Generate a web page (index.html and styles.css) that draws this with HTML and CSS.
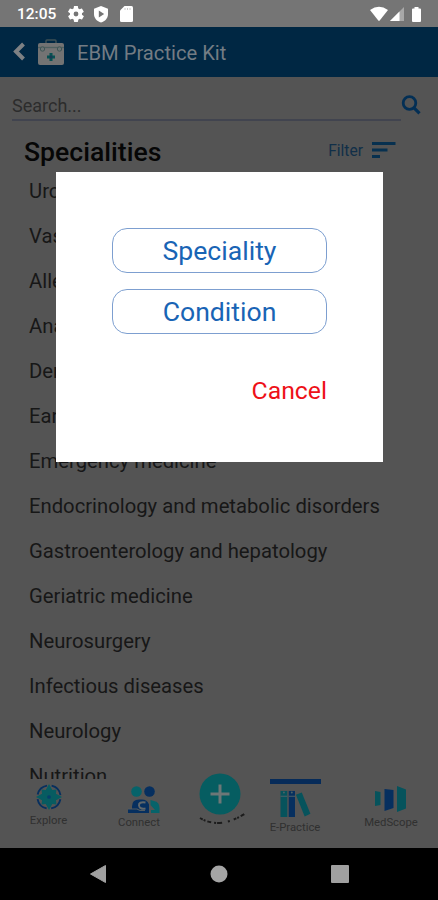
FILE: index.html
```html
<!DOCTYPE html>
<html lang="en">

<head>
  <meta charset="UTF-8" />
  <meta name="viewport" content="width=device-width, initial-scale=1.0" />
  <title>EBM Practice Kit</title>
  <link rel="stylesheet" href="styles.css">
</head>

<body>
  <div class="screen">
    <div class="status-bar">
      <span class="clock">12:05</span>
      <svg class="gear" width="16" height="16" viewBox="2 2 20 20" fill="#fff">
        <path fill-rule="evenodd" d="M19.4 13c0-.3.1-.6.1-1s0-.7-.1-1l2.1-1.6c.2-.2.3-.4.1-.6l-2-3.5c-.1-.2-.4-.3-.6-.2l-2.5 1c-.5-.4-1.1-.7-1.7-1l-.4-2.600c0-.3-.2-.5-.5-.5h-4c-.3 0-.5.2-.5.5L9 5.100c-.6.2-1.200.6-1.700 1l-2.500-1c-.2-.1-.5 0-.6.2l-2 3.500c-.1.2-.1.5.1.6L4.500 11c0 .3-.1.600-.1 1s0 .700.1 1l-2.100 1.600c-.2.2-.3.400-.1.600l2 3.500c.1.2.4.3.6.2l2.500-1c.5.4 1.100.700 1.700 1l.4 2.600c0 .3.2.5.500.5h4c.3 0 .5-.2.500-.5l.400-2.600c.6-.2 1.200-.6 1.700-1l2.500 1c.2.1.5 0 .6-.2l2-3.500c.1-.2.1-.5-.1-.600zM12 15a3 3 0 1 1 0-6 3 3 0 0 1 0 6z" />
      </svg>
      <svg class="shield" width="14" height="17" viewBox="0 0 14 17">
        <path fill="#fff" d="M7 0l7 2.800v5.200c0 4-3 7.500-7 8.500-4-1-7-4.500-7-8.500V2.800z" />
        <path fill="#757575" d="M4.800 4.600l5.400 3.400-5.400 3.400z" />
      </svg>
      <svg class="sd" width="13" height="16" viewBox="0 0 13 16">
        <path fill="#fff" d="M4.500 0h7Q13 0 13 1.500v13q0 1.500-1.500 1.500h-10Q0 16 0 14.500V4.500z" />
        <path stroke="#ccc" d="M5 2v2M7.500 2v2M10 2v2" />
      </svg>
      <svg class="signals" width="54" height="17" viewBox="0 0 54 17">
        <path fill="#fff" d="M0 4Q9-2.500 18 4L9.700 14.500q-.7.800-1.400 0z" />
        <path fill="#a8a8a8" d="M34 1v14H20z" />
        <path fill="#fff" d="M29.500 5.500V15H20z" />
        <path fill="#fff" d="M44.500 1h4v1.500h1.500q1 0 1 1V15q0 1-1 1h-7q-1 0-1-1V3.500q0-1 1-1h1.500z" />
      </svg>
    </div>

    <div class="header">
      <svg class="back" width="12" height="20" viewBox="0 0 12 20">
        <path d="M10.500 2L3 9.500l7.500 7.500" fill="none" stroke="#7e8184" stroke-width="4" />
      </svg>
      <svg class="kit" width="28" height="27" viewBox="0 0 28 27">
        <path d="M9 4V2q0-1 1-1h8q1 0 1 1v2" fill="none" stroke="#3d5056" stroke-width="1.500" />
        <rect x="1" y="4" width="26" height="22" rx="2" fill="#737373" />
        <path d="M1 8.500h26" stroke="#4f6060" stroke-width="1.300" />
        <circle cx="5.500" cy="10" r="2.200" fill="#6c7373" stroke="#405656" />
        <circle cx="22.500" cy="10" r="2.200" fill="#6c7373" stroke="#405656" />
        <path d="M12.500 14h3v2.500H18v3h-2.500V22h-3v-2.500H10v-3h2.500z" fill="#075152" />
        <circle cx="14" cy="18" r="1.500" fill="#183754" />
      </svg>
      <span class="title">EBM Practice Kit</span>
    </div>

    <div class="search">
      <div class="search-field">Search...</div>
      <svg width="20" height="20" viewBox="0 0 20 20" fill="none" stroke="#032f55">
        <circle cx="8.500" cy="8" r="6.300" stroke-width="2.800" />
        <path d="M13 12.800l5.500 5.500" stroke-width="3.200" />
      </svg>
    </div>

    <div class="list-head">
      <h1>Specialities</h1>
      <span class="filter">Filter</span>
      <svg width="24" height="18" viewBox="0 0 24 18" fill="#07304f">
        <rect x="0" y="0" width="23.500" height="3" />
        <rect x="0" y="6.500" width="15.500" height="3" />
        <rect x="0" y="13" width="8" height="3" />
      </svg>
    </div>

    <ul class="list">
      <li>Urology</li>
      <li>Vascular surgery</li>
      <li>Allergology</li>
      <li>Anaesthesiology</li>
      <li>Dermatology</li>
      <li>Ear, nose and throat</li>
      <li>Emergency medicine</li>
      <li>Endocrinology and metabolic disorders</li>
      <li>Gastroenterology and hepatology</li>
      <li>Geriatric medicine</li>
      <li>Neurosurgery</li>
      <li>Infectious diseases</li>
      <li>Neurology</li>
      <li>Nutrition</li>
    </ul>

    <div class="tabs">
      <div class="tab explore">
        <svg width="26" height="26" viewBox="0 0 28 28">
          <circle cx="14" cy="14" r="12.500" fill="none" stroke="#062f5f" stroke-width="2" stroke-dasharray="14.600 5.035" stroke-dashoffset="-2.500" />
          <path d="M14 0l3.500 6.500 4.500-.5-.5 4.500L28 14l-6.500 3.500.5 4.500-4.500-.5L14 28l-3.500-6.500-4.500.5.500-4.500L0 14l6.500-3.500L6 6l4.500.5z" fill="#075c61" />
          <circle cx="14" cy="14" r="2" fill="#073f6c" />
        </svg>
        <span>Explore</span>
      </div>
      <div class="tab connect">
        <svg width="33" height="27" viewBox="0 0 33 27">
          <circle cx="9.500" cy="5.500" r="5.300" fill="#06636a" />
          <circle cx="22.500" cy="5.500" r="5.300" fill="#062f5f" />
          <path d="M1 27v-4h4v-2.500H5q0-7 7-7h3q5 0 7 5V27z" fill="#062f5f" />
          <path d="M1 23h9l3 1.500h5" fill="none" stroke="#525b61" stroke-width="1.200" />
          <path d="M18.500 16.500q-7-1-6.500 3 .5 4 6.500 3" fill="none" stroke="#60676b" stroke-width="2" />
          <path d="M23.500 14l3.500 1q5.500 1 5.500 7v5h-8.500v-3h4l-4.500-5z" fill="#06636a" />
        </svg>
        <span>Connect</span>
      </div>
      <div class="tab add">
        <svg width="54" height="54" viewBox="0 0 54 54">
          <circle cx="27" cy="21" r="20.500" fill="#065d61" />
          <path d="M27 11.500v19M17.500 21h19" stroke="#6d7777" stroke-width="3" />
          <path d="M7 45q20 12 46-5" fill="none" stroke="#1c1c1c" stroke-width="2" stroke-dasharray="3 1 2 2 4 3 2 1 5 6 2 4" />
        </svg>
      </div>
      <div class="tab practice">
        <svg width="32" height="27" viewBox="0 0 32 28">
          <rect x="1" y="1" width="7" height="27" fill="#06535c" />
          <rect x="9.500" y="1" width="6.500" height="27" fill="#062f5f" />
          <path d="M17 5l6-2.500 9 22-6 3z" fill="#06535c" />
          <path d="M1 6.500h7M9.500 6.500H16" stroke="#4d6268" stroke-width="1.200" />
          <circle cx="4.500" cy="2.500" r="1" fill="#4d6268" />
          <circle cx="12.700" cy="2.500" r="1" fill="#4d6268" />
        </svg>
        <span>E-Practice</span>
      </div>
      <div class="tab medscope">
        <svg width="32" height="26" viewBox="0 0 32 26">
          <path d="M1 5l5.500 1v13L1 20z" fill="#06535c" />
          <path d="M10.500 3l9 1v18l-9 3z" fill="#062f5f" />
          <path d="M23 0l9 3.500v19L23 26z" fill="#06535c" />
        </svg>
        <span>MedScope</span>
      </div>
    </div>

    <div class="nav-bar">
      <svg width="18" height="20" viewBox="0 0 18 20">
        <path d="M16.500 1.500v17L1.500 10z" fill="#a0a0a0" stroke="#a0a0a0" stroke-linejoin="round" />
      </svg>
      <svg width="18" height="18" viewBox="0 0 18 18">
        <circle cx="9" cy="9" r="8.500" fill="#a5a5a5" />
      </svg>
      <svg width="18" height="18" viewBox="0 0 18 18">
        <rect width="18" height="18" rx="1" fill="#a0a0a0" />
      </svg>
    </div>

    <div class="modal">
      <button class="option">Speciality</button>
      <button class="option">Condition</button>
      <button class="cancel">Cancel</button>
    </div>
  </div>
</body>

</html>
```
FILE: styles.css
```css
* {
  margin: 0;
  padding: 0;
  box-sizing: border-box;
}

body {
  font-family: Roboto, "Liberation Sans", sans-serif;
  background-color: #545454;
}

svg {
  display: block;
  flex: none;
}

.screen {
  position: relative;
  display: flex;
  flex-direction: column;
  width: 438px;
  height: 900px;
  overflow: hidden;
}

.status-bar {
  display: flex;
  align-items: center;
  height: 27px;
  padding: 1px 14px 0 17px;
  background-color: #757575;
}

.clock {
  width: 51px;
  font-size: 15.5px;
  font-weight: 500;
  color: #fff;
}

.shield {
  margin-left: 10px;
}

.sd {
  margin-left: 12px;
}

.signals {
  margin-left: auto;
}

.header {
  display: flex;
  align-items: center;
  height: 50px;
  padding: 0 13px;
  background-color: #002743;
}

.kit {
  margin-left: 12px;
}

.title {
  margin: 2px 0 0 12px;
  font-size: 20.2px;
  color: #737c84;
}

.search {
  display: flex;
  align-items: center;
  height: 56px;
  padding: 0 17px 0 12px;
}

.search-field {
  width: 389px;
  height: 32px;
  line-height: 33px;
  font-size: 18px;
  color: #2c2c2c;
  border-bottom: 2px solid #41444f;
}

.list-head {
  display: flex;
  align-items: center;
  height: 36px;
  padding: 0 42px 0 24px;
}

.list-head h1 {
  flex: 1;
  font-size: 26.6px;
  font-weight: 500;
  color: #060606;
}

.filter {
  margin-right: 9px;
  font-size: 15.6px;
  color: #112f48;
}

.list {
  height: 610px;
  overflow: hidden;
  list-style: none;
}

.list li {
  height: 45px;
  padding-left: 29px;
  font-size: 20.25px;
  line-height: 44px;
  color: #171717;
  white-space: nowrap;
}

.tabs {
  display: flex;
  height: 69px;
}

.tab {
  display: flex;
  flex: none;
  flex-direction: column;
  align-items: center;
  font-size: 11.3px;
  line-height: 14px;
  color: #303030;
}

.explore {
  width: 97px;
  padding-top: 5px;
}

.explore span {
  margin-top: 4px;
}

.connect {
  width: 84px;
  padding-top: 7px;
}

.connect svg {
  margin-left: 9px;
}

.connect span {
  margin-top: 3px;
}

.add {
  width: 77px;
  margin-top: -6px;
}

.practice {
  width: 74px;
  padding-top: 11px;
}

/* active tab marker */
.practice::before {
  content: "";
  position: absolute;
  top: 779px;
  width: 51px;
  height: 5px;
  background-color: #062b59;
}

.practice span {
  margin-top: 4px;
}

.medscope {
  width: 106px;
  padding: 7px 0 0 12px;
}

.medscope svg {
  margin-right: 2px;
}

.medscope span {
  margin-top: 4px;
}

.nav-bar {
  display: flex;
  align-items: center;
  justify-content: space-between;
  height: 52px;
  padding: 0 89px;
  background-color: #000;
}

.modal {
  position: absolute;
  top: 172px;
  left: 56px;
  display: flex;
  flex-direction: column;
  width: 327px;
  height: 290px;
  padding: 56px 56px 0;
  background-color: #fff;
}

.option,
.cancel {
  font-family: inherit;
  background: none;
  border: none;
}

.option {
  height: 45px;
  margin-bottom: 16px;
  font-size: 26.6px;
  color: #1964b5;
  border: 1px solid #7d9fd0;
  border-radius: 15px;
}

.cancel {
  align-self: flex-end;
  margin-top: 26px;
  font-size: 24.8px;
  color: #ee1118;
}
```
